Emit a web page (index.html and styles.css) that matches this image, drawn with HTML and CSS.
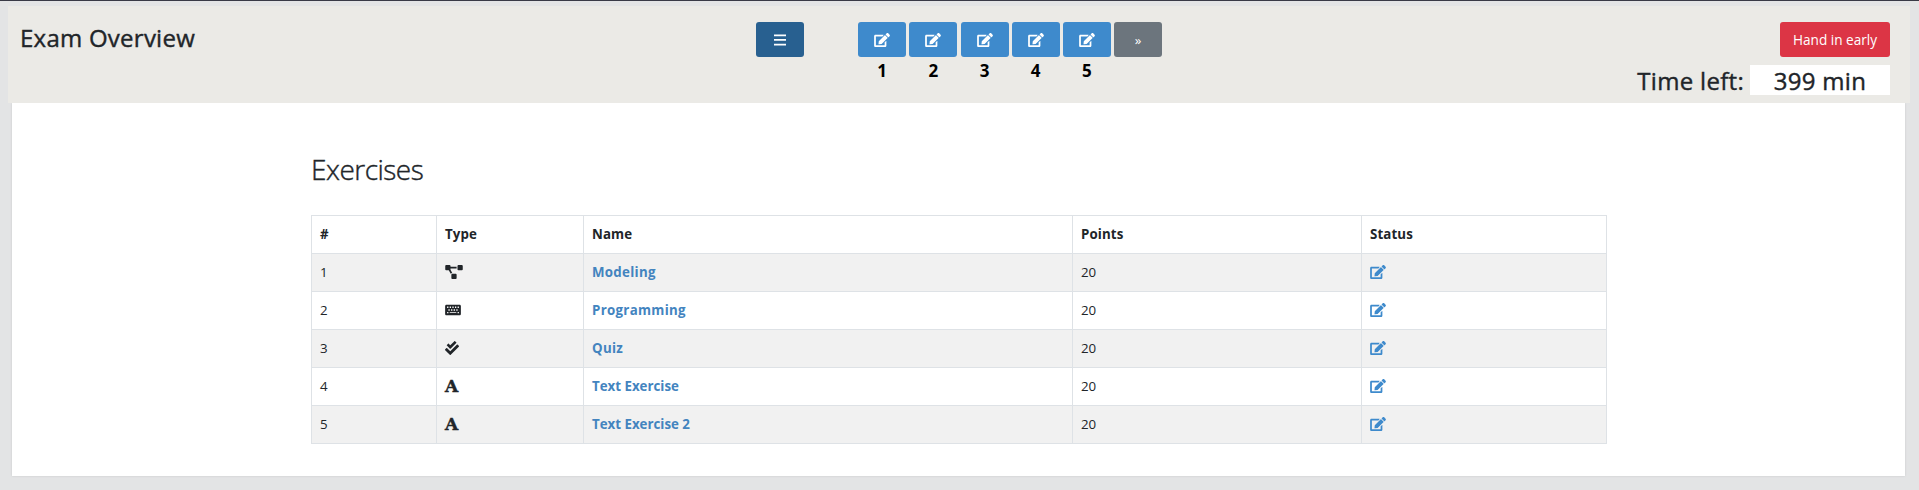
FILE: index.html
```html
<!DOCTYPE html>
<html lang="en">
<head>
<meta charset="utf-8">
<title>Exam Overview</title>
<link rel="stylesheet" href="styles.css">
</head>
<body>
<svg class="sprite" aria-hidden="true">
  <symbol id="edit" viewBox="0 0 576 512"><path d="M402.6 83.2l90.2 90.2c3.8 3.8 3.8 10 0 13.8L274.4 405.6l-92.8 10.3c-12.4 1.4-22.9-9.1-21.5-21.5l10.3-92.8L388.8 83.2c3.8-3.8 10-3.8 13.8 0zm162-22.9l-48.8-48.8c-15.2-15.2-39.9-15.2-55.2 0l-35.4 35.4c-3.8 3.8-3.8 10 0 13.8l90.2 90.2c3.8 3.8 10 3.8 13.8 0l35.4-35.4c15.2-15.3 15.2-40 0-55.2zM384 346.2V448H64V128h229.8c3.2 0 6.2-1.3 8.5-3.5l40-40c7.6-7.6 2.2-20.5-8.5-20.5H48C21.5 64 0 85.5 0 112v352c0 26.5 21.5 48 48 48h352c26.5 0 48-21.5 48-48V306.2c0-10.7-12.9-16-20.5-8.5l-40 40c-2.2 2.3-3.5 5.3-3.5 8.5z"/></symbol>
</svg>
<header class="bar">
  <h3 class="title"><span>Exam Overview</span></h3>
  <nav class="nav">
    <button class="btn menu"><svg width="12" height="12" viewBox="0 0 12 12"><path d="M0 .5h12v1.7H0zM0 5.1h12v1.7H0zM0 9.7h12v1.7H0z"/></svg></button>
    <div class="step"><button class="btn"><svg width="16" height="14"><use href="#edit"/></svg></button><b>1</b></div>
    <div class="step"><button class="btn"><svg width="16" height="14"><use href="#edit"/></svg></button><b>2</b></div>
    <div class="step"><button class="btn"><svg width="16" height="14"><use href="#edit"/></svg></button><b>3</b></div>
    <div class="step"><button class="btn"><svg width="16" height="14"><use href="#edit"/></svg></button><b>4</b></div>
    <div class="step"><button class="btn"><svg width="16" height="14"><use href="#edit"/></svg></button><b>5</b></div>
    <button class="btn next">»</button>
  </nav>
  <div class="side">
    <button class="btn hand"><span>Hand in early</span></button>
    <div class="time"><span class="label">Time left:</span><span class="value"><span>399 min</span></span></div>
  </div>
</header>
<main class="card">
  <h2 class="heading"><span>Exercises</span></h2>
  <table class="table">
    <colgroup><col class="c1"><col class="c2"><col class="c3"><col class="c4"><col class="c5"></colgroup>
    <thead><tr><th>#</th><th>Type</th><th>Name</th><th>Points</th><th>Status</th></tr></thead>
    <tbody>
      <tr><td>1</td><td><svg width="18" height="14" viewBox="0 0 640 512"><path d="M384 320H256c-17.67 0-32 14.33-32 32v128c0 17.67 14.33 32 32 32h128c17.67 0 32-14.33 32-32V352c0-17.67-14.33-32-32-32zM192 32c0-17.67-14.33-32-32-32H32C14.33 0 0 14.33 0 32v128c0 17.67 14.33 32 32 32h95.72l73.16 128.04C211.98 300.98 232.4 288 256 288h.28L192 175.51V128h224V64H192V32zM608 0H480c-17.67 0-32 14.33-32 32v128c0 17.67 14.33 32 32 32h128c17.67 0 32-14.33 32-32V32c0-17.67-14.33-32-32-32z"/></svg></td><td><a>Modeling</a></td><td>20</td><td><svg class="link" width="16" height="14"><use href="#edit"/></svg></td></tr>
      <tr><td>2</td><td><svg width="16" height="14" viewBox="0 0 576 512"><path fill-rule="evenodd" d="M528 448H48c-26.500 0-48-21.500-48-48V112c0-26.500 21.500-48 48-48h480c26.500 0 48 21.500 48 48v288c0 26.500-21.500 48-48 48zM72 132h48v52H72zM168 132h48v52h-48zM264 132h48v52h-48zM360 132h48v52h-48zM456 132h48v52h-48zM120 228h48v52h-48zM216 228h48v52h-48zM312 228h48v52h-48zM408 228h48v52h-48zM72 328h48v48H72zM168 334h240v36H168zM456 328h48v48h-48z"/></svg></td><td><a>Programming</a></td><td>20</td><td><svg class="link" width="16" height="14"><use href="#edit"/></svg></td></tr>
      <tr><td>3</td><td><svg width="14" height="14" viewBox="0 0 512 512"><path d="M505 174.800l-39.600-39.600c-9.400-9.400-24.600-9.400-33.900 0L192 374.700 80.600 263.200c-9.400-9.400-24.600-9.400-33.900 0L7 302.900c-9.400 9.400-9.400 24.600 0 34L175 505c9.400 9.400 24.600 9.400 33.900 0l296-296.200c9.400-9.500 9.400-24.700.1-34zm-324.300 106c6.200 6.300 16.400 6.300 22.600 0l208-208.200c6.200-6.300 6.200-16.400 0-22.600L366.100 4.700c-6.200-6.300-16.400-6.300-22.600 0L192 156.200l-55.400-55.500c-6.200-6.300-16.400-6.300-22.600 0L68.700 146c-6.200 6.300-6.200 16.400 0 22.600l112 112.200z"/></svg></td><td><a>Quiz</a></td><td>20</td><td><svg class="link" width="16" height="14"><use href="#edit"/></svg></td></tr>
      <tr><td>4</td><td><span class="serif">A</span></td><td><a class="tight">Text Exercise</a></td><td>20</td><td><svg class="link" width="16" height="14"><use href="#edit"/></svg></td></tr>
      <tr><td>5</td><td><span class="serif">A</span></td><td><a class="tight">Text Exercise 2</a></td><td>20</td><td><svg class="link" width="16" height="14"><use href="#edit"/></svg></td></tr>
    </tbody>
  </table>
</main>
</body>
</html>
```

FILE: styles.css
```css
* { box-sizing: border-box; }
body {
  margin: 0;
  height: 490px;
  overflow: hidden;
  padding: 5px 9px 0 8px;
  border-top: 1px solid #393a46;
  background: #e3e4e5;
  color: #212529;
  font-family: "Open Sans", "Noto Sans", sans-serif;
  font-size: 13.3px;
}
.sprite { display: none; }
svg { display: block; fill: currentColor; }
h2, h3 { margin: 0; }
.bar {
  display: grid;
  grid-template-columns: 748px 1fr 300px;
  height: 97px;
  padding-right: 20px;
  background: #ebeae6;
}
.title {
  padding: 15px 0 0 12px;
  font-size: 24px;
  line-height: 34px;
  font-weight: 500;
  letter-spacing: .25px;
  -webkit-text-stroke: .4px currentColor;
}
.nav { display: flex; gap: 3.15px; padding-top: 16px; align-items: flex-start; }
.btn {
  display: flex;
  align-items: center;
  justify-content: center;
  width: 48px;
  height: 35px;
  padding: 0;
  border: 0;
  border-radius: 3px;
  background: #3e8acc;
  color: #fff;
  font: inherit;
}
.menu { background: #286090; margin-right: 51.1px; }
.next { background: #6c757d; }
.step b {
  display: block;
  margin-top: 3px;
  text-align: center;
  font-size: 17px;
  line-height: 22px;
  color: #000;
}
.side { display: flex; flex-direction: column; align-items: flex-end; padding-top: 16px; }
.hand { width: 110px; background: #dc3545; font-size: 13.6px; }
.time {
  display: flex;
  gap: 6px;
  margin-top: 8px;
  font-size: 24px;
  line-height: 31px;
  font-weight: 500;
  letter-spacing: .3px;
  -webkit-text-stroke: .4px currentColor;
  white-space: nowrap;
}
.value { width: 140px; height: 30px; text-align: center; background: #fff; }
.card {
  height: 373px;
  margin: 0 5px 0 4px;
  padding: 47px 299px 0;
  background: #fff;
  box-shadow: 0 0 2px #c8c9cb;
  clip-path: inset(0 -3px -3px -3px);
}
.heading {
  font-size: 28px;
  line-height: 38px;
  font-weight: 300;
  letter-spacing: -.5px;
  -webkit-text-stroke: .4px currentColor;
}
.table {
  width: 1296px;
  margin-top: 27px;
  border-collapse: collapse;
  table-layout: fixed;
}
.c1 { width: 125px; }
.c2 { width: 147px; }
.c3 { width: 489px; }
.c4 { width: 289px; }
.c5 { width: 245px; }
th, td {
  height: 38px;
  padding: 0 8px 1px;
  border: 1px solid #dee2e6;
  text-align: left;
  line-height: 20px;
}
th { font-weight: 700; letter-spacing: .1px; }
tbody tr:nth-child(odd) { background: #f1f1f1; }
a { color: #4384bf; font-weight: 700; letter-spacing: .3px; }
.tight { letter-spacing: 0; }
.link { color: #3e8acc; }
.serif {
  display: block;
  font: 700 17px/20px "DejaVu Serif", serif;
  -webkit-text-stroke: .5px currentColor;
}
```
